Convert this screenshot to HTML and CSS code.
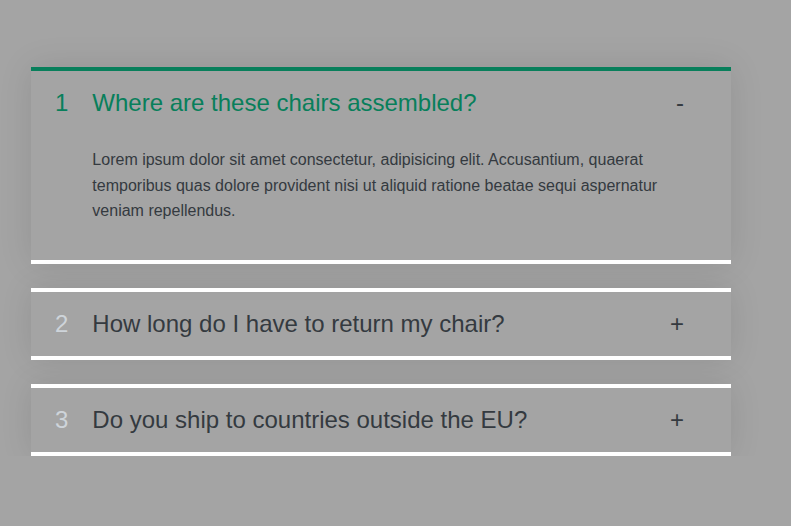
FILE: index.html
```html
<!DOCTYPE html>
<html lang="en">
<head>
<meta charset="utf-8">
<title>Accordion</title>
<link rel="stylesheet" href="styles.css">
</head>
<body>
<div class="accordion">
  <div class="item open">
    <p class="number">1</p>
    <p class="title">Where are these chairs assembled?</p>
    <p class="icon">-</p>
    <div class="content-box">
      <p>Lorem ipsum dolor sit amet consectetur, adipisicing elit. Accusantium, quaerat temporibus quas dolore provident nisi ut aliquid ratione beatae sequi aspernatur veniam repellendus.</p>
    </div>
  </div>
  <div class="item">
    <p class="number">2</p>
    <p class="title">How long do I have to return my chair?</p>
    <p class="icon">+</p>
  </div>
  <div class="item">
    <p class="number">3</p>
    <p class="title">Do you ship to countries outside the EU?</p>
    <p class="icon">+</p>
  </div>
</div>
</body>
</html>
```
FILE: styles.css
```css
* {
  margin: 0;
  padding: 0;
  box-sizing: border-box;
}

body {
  background: #a4a4a4;
  font-family: "Liberation Sans", Arial, sans-serif;
  color: #343a40;
}

.accordion {
  width: 700px;
  margin: 67px 0 0 31px;
  display: flex;
  flex-direction: column;
  gap: 24px;
}

.item {
  box-shadow: 0 0 32px rgba(0, 0, 0, 0.1);
  padding: 18px 47px 18px 24px;
  display: grid;
  grid-template-columns: auto 1fr auto;
  column-gap: 24px;
  row-gap: 30px;
  align-items: center;
  border-top: 4px solid #fff;
  border-bottom: 4px solid #fff;
}

.number,
.title,
.icon {
  font-size: 24px;
  line-height: 28px;
}

.number {
  color: #ced4da;
}

.title {
  font-weight: 400;
}

.icon {
  text-align: right;
}

.open {
  border-top: 4px solid #087f5b;
}

.open .number,
.open .title {
  color: #087f5b;
}

.content-box {
  grid-column: 2 / -1;
  padding-bottom: 18px;
  line-height: 1.6;
  font-size: 16px;
}
```
